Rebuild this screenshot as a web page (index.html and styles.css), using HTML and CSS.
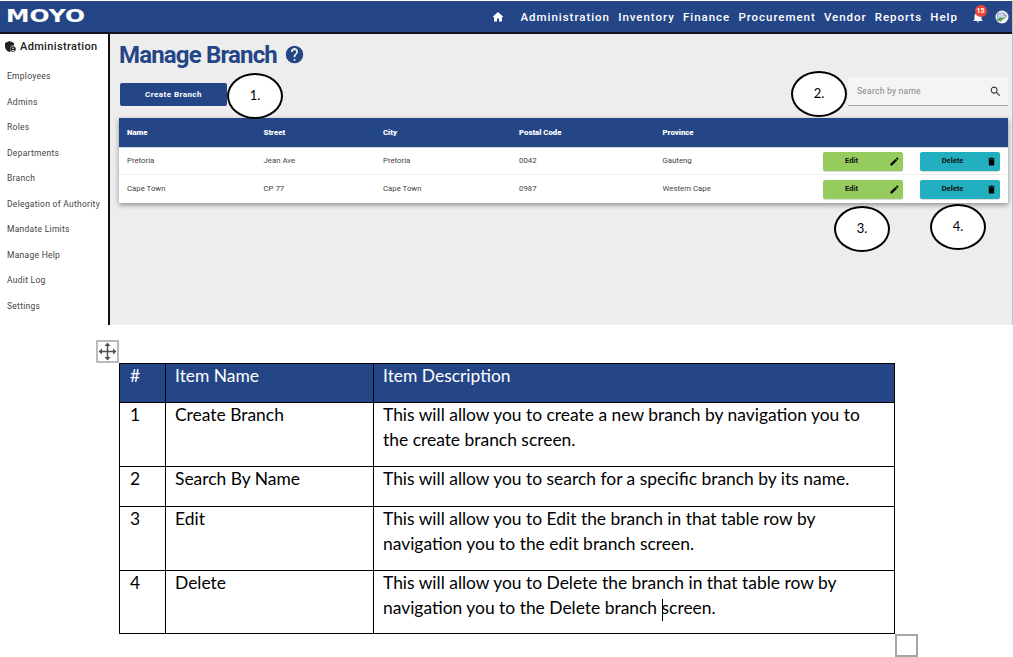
FILE: index.html
```html
<!DOCTYPE html>
<html lang="en">
<head>
<meta charset="utf-8">
<title>Manage Branch</title>
<link rel="stylesheet" href="styles.css">
</head>
<body>
<svg class="defs" width="0" height="0">
  <symbol id="pencil" viewBox="2 2 20 20"><path d="M3 17.25V21h3.75L17.8 9.94l-3.75-3.75zM20.7 7.04a1 1 0 0 0 0-1.41l-2.34-2.34a1 1 0 0 0-1.41 0l-1.83 1.83 3.75 3.75z"/></symbol>
  <symbol id="trash" viewBox="2 2 20 20"><path d="M6 19c0 1.100.9 2 2 2h8c1.100 0 2-.9 2-2V7H6zM19 4h-3.500l-1-1h-5l-1 1H5v2h14z"/></symbol>
</svg>
<section class="app">
  <header class="topbar">
    <svg class="logo" width="80" height="18" viewBox="0 0 80 18"><text x="0" y="15" textLength="79" lengthAdjust="spacingAndGlyphs">MOYO</text></svg>
    <svg class="home" width="12" height="12" viewBox="0 0 24 24"><path d="M10 21v-6h4v6h6v-9h3L12 2 1 12h3v9z"/></svg>
    <nav class="nav"><a>Administration</a><a>Inventory</a><a>Finance</a><a>Procurement</a><a>Vendor</a><a>Reports</a><a>Help</a></nav>
    <div class="bell">
      <svg width="12" height="12" viewBox="0 0 24 24"><path d="M12 23a2 2 0 0 0 2-2h-4a2 2 0 0 0 2 2zm7-6v-6c0-3.500-2-6.200-5-7V3a2 2 0 0 0-4 0v1c-3 .8-5 3.500-5 7v6l-2 2v1h18v-1z"/></svg>
      <span class="badge">15</span>
    </div>
    <svg class="avatar" width="14" height="14" viewBox="0 0 14 14"><circle cx="7" cy="7" r="6.500" fill="#f5f5f5"/><path d="M2.500 3h6.500l2.500 2.500V8L3 11z" fill="#c3d6ef"/><path d="M2.500 10.500c1-3 3-4 5-2.500l3-1.500-5 5z" fill="#58a64c"/><path d="M9 3v2.500h2.500M2.500 11V3H9l2.500 2.500M5 11.500l6.500-5" fill="none" stroke="#8a969c" stroke-width=".7"/></svg>
  </header>
  <div class="body">
    <aside class="sidebar">
      <h2><svg width="11" height="11" viewBox="0 0 22 22"><path d="M9 0l9 4v5c-5-1-9 3-8 8 .3 1.700 1 3 2 4-1 .6-2 1-3 1-5-1-9-6-9-11V4z"/><circle cx="16" cy="16" r="5.500"/><circle cx="16" cy="14.500" r="1.600" fill="#fff"/><path d="M13 18.500q3-2.500 6 0-3 3-6 0z" fill="#fff"/></svg><span>Administration</span></h2>
      <a>Employees</a><a>Admins</a><a>Roles</a><a>Departments</a><a>Branch</a><a>Delegation of Authority</a><a>Mandate Limits</a><a>Manage Help</a><a>Audit Log</a><a>Settings</a>
    </aside>
    <main class="main">
      <h1><span>Manage Branch</span><svg width="21" height="21" viewBox="0 0 24 24"><path fill-rule="evenodd" d="M12 2a10 10 0 1 0 0 20 10 10 0 0 0 0-20zm1 17h-2v-2h2zm2.070-7.750l-.9.920C13.450 12.900 13 13.500 13 15h-2v-.5c0-1.100.45-2.100 1.170-2.830l1.240-1.260A2 2 0 1 0 10 9H8a4 4 0 1 1 7.070 2.250z"/></svg></h1>
      <div class="tools">
        <button class="create">Create Branch</button>
        <label class="search"><span>Search by name</span><svg width="13" height="13" viewBox="0 0 24 24"><path d="M15.500 14h-.79l-.28-.27A6.500 6.500 0 1 0 13.730 14.430l.27.28v.79l5 5L20.500 19zm-6 0a4.500 4.500 0 1 1 0-9 4.500 4.500 0 0 1 0 9z"/></svg></label>
      </div>
      <div class="grid">
        <div class="row head"><span>Name</span><span>Street</span><span>City</span><span>Postal Code</span><span>Province</span></div>
        <div class="row"><span>Pretoria</span><span>Jean Ave</span><span>Pretoria</span><span>0042</span><span>Gauteng</span><button class="edit">Edit<svg><use href="#pencil"/></svg></button><button class="del">Delete<svg><use href="#trash"/></svg></button></div>
        <div class="row"><span>Cape Town</span><span>CP 77</span><span>Cape Town</span><span>0987</span><span>Western Cape</span><button class="edit">Edit<svg><use href="#pencil"/></svg></button><button class="del">Delete<svg><use href="#trash"/></svg></button></div>
      </div>
    </main>
  </div>
  <span class="mark m1">1.</span><span class="mark m2">2.</span><span class="mark m3">3.</span><span class="mark m4">4.</span>
</section>
<section class="doc">
  <svg class="move" width="23" height="23" viewBox="0 0 23 23"><rect x="1" y="1" width="21" height="21" fill="#fff" stroke="#a5a5a5" stroke-width="1.500"/><path d="M11.500 5v13M5 11.500h13" stroke="#505050" stroke-width="1.500"/><path d="M11.500 2.500l3 3.500h-6zM11.500 20.500l3-3.500h-6zM2.500 11.500L6 8.500v6zM20.500 11.500L17 8.500v6z" fill="#505050"/></svg>
  <table>
    <tr class="r0"><th><p>#</p></th><th><p>Item Name</p></th><th><p>Item Description</p></th></tr>
    <tr class="r1"><td><p>1</p></td><td><p>Create Branch</p></td><td><p>This will allow you to create a new branch by navigation you to<br>the create branch screen.</p></td></tr>
    <tr class="r2"><td><p>2</p></td><td><p>Search By Name</p></td><td><p>This will allow you to search for a specific branch by its name.</p></td></tr>
    <tr class="r3"><td><p>3</p></td><td><p>Edit</p></td><td><p>This will allow you to Edit the branch in that table row by<br>navigation you to the edit branch screen.</p></td></tr>
    <tr class="r4"><td><p>4</p></td><td><p>Delete</p></td><td><p>This will allow you to Delete the branch in that table row by<br>navigation you to the Delete branch <i class="caret"></i>screen.</p></td></tr>
  </table>
  <div class="handle"></div>
</section>
</body>
</html>
```
FILE: styles.css
```css
* { box-sizing: border-box; }
body { margin: 0; background: #fff; width: 1013px; height: 657px; overflow: hidden; }
.defs { position: absolute; }
.app { position: relative; height: 325px; padding-top: 1px; border-right: 1px solid #c4c4c4; font-family: Roboto, sans-serif; display: flex; flex-direction: column; }
.topbar { height: 33px; flex: none; background: #244687; border-bottom: 2px solid #10131c; display: flex; align-items: center; color: #fff; fill: #fff; }
.logo { margin-left: 6px; margin-top: -1px; font: bold 17px "DejaVu Sans", sans-serif; }
.home { margin-left: 406px; }
.nav { display: flex; gap: 8.2px; margin-left: 16.5px; font-size: 11.5px; font-weight: 500; letter-spacing: .97px; white-space: nowrap; width: 451px; }
.bell { position: relative; display: flex; }
.badge { position: absolute; left: 3px; top: -6px; width: 12px; height: 12px; border-radius: 50%; background: #f04438; font-size: 7px; font-weight: 700; line-height: 12px; text-align: center; }
.avatar { margin-left: 11px; }
.body { display: flex; flex: 1; }
.sidebar { width: 110px; flex: none; border-right: 2px solid #111; padding: 4px 0 0 7px; display: flex; flex-direction: column; color: #444; }
.sidebar h2 { margin: 0 0 9px -2px; height: 17px; display: flex; align-items: center; gap: 4px; font-size: 11px; font-weight: 500; letter-spacing: .35px; color: #222; fill: #222; }
.sidebar a { height: 25.5px; line-height: 25.5px; font-size: 8.5px; letter-spacing: .27px; white-space: nowrap; }
.main { flex: 1; background: #ededed; padding: 8px 4px 0 9px; }
h1 { margin: 0; height: 25px; display: flex; align-items: center; gap: 7px; font-size: 24px; line-height: 25px; font-weight: 700; letter-spacing: -.83px; color: #244687; fill: #244687; }
h1 span { padding-top: 2px; }
h1 svg { margin-top: -1px; }
.tools { display: flex; justify-content: space-between; align-items: flex-start; height: 51px; padding: 10px 0 0 1px; }
button { border: 0; padding: 0; font-family: Roboto, sans-serif; border-radius: 2px; font-weight: 700; }
.create { margin-top: 6px; width: 107px; height: 23px; background: #244687; color: #fff; font-size: 8px; letter-spacing: .45px; padding-bottom: 1px; }
.search { width: 160px; height: 29px; background: #f4f4f4; border-bottom: 1px solid #aaa; padding: 0 6px 0 9px; display: flex; align-items: center; justify-content: space-between; font-size: 8.5px; letter-spacing: .25px; color: #858585; fill: #333; }
.grid { width: 889px; background: #fff; box-shadow: 0 2px 5px rgba(0,0,0,.4); font-size: 7.8px; color: #444; }
.row { display: grid; grid-template-columns: 136.500px 119.500px 136px 143.500px 160.500px 97px 80px; padding-left: 8px; height: 27px; align-items: center; border-bottom: 1px solid #eee; }
.row span { padding-bottom: 1px; }
.row.head { height: 30px; background: #244687; color: #fff; font-weight: 900; border-bottom-color: #ccd3e2; }
.row:last-child { height: 28px; border: 0; }
.edit, .del { position: relative; width: 80px; height: 19px; font-size: 7.500px; color: #111; padding: 0 23px 1px 0; background: #95cc5d; box-shadow: 0 1px 1px rgba(0,0,0,.15); }
.del { background: #22afbf; padding-right: 15px; }
.edit svg, .del svg { position: absolute; right: 4px; top: 5px; width: 9px; height: 9px; }
.mark { position: absolute; width: 56px; height: 46px; border: 2px solid #000; border-radius: 50%; background: #fff; font: 13px/41px Lato, sans-serif; text-align: center; color: #000; }
.m1 { left: 227px; top: 73px; }
.m2 { left: 791px; top: 71px; }
.m3 { left: 834px; top: 206px; }
.m4 { left: 930px; top: 204px; }
.doc { padding: 15px 0 0 96px; font: 17.430px/25px Lato, sans-serif; color: #000; }
.move { display: block; }
table { border-collapse: collapse; table-layout: fixed; width: 776px; margin-left: 23px; }
th, td { border: 1px solid #000; padding: 0 0 0 9px; vertical-align: top; text-align: left; font-weight: 400; white-space: nowrap; }
td:first-child, th:first-child { padding-left: 10px; }
p { margin: -1px 0 0; }
th { background: #244687; color: #fff; }
th:first-child { width: 46px; }
th:nth-child(2) { width: 208px; }
.r0 { height: 39px; }
.r1, .r3 { height: 64px; }
.r2 { height: 40px; }
.r4 { height: 63px; }
.caret { display: inline-block; width: 1px; height: 22px; margin: -4px -1px -4px 0; background: #000; vertical-align: middle; }
.handle { width: 23px; height: 23px; margin-left: 799px; border: 2px solid #a5a5a5; }
```
